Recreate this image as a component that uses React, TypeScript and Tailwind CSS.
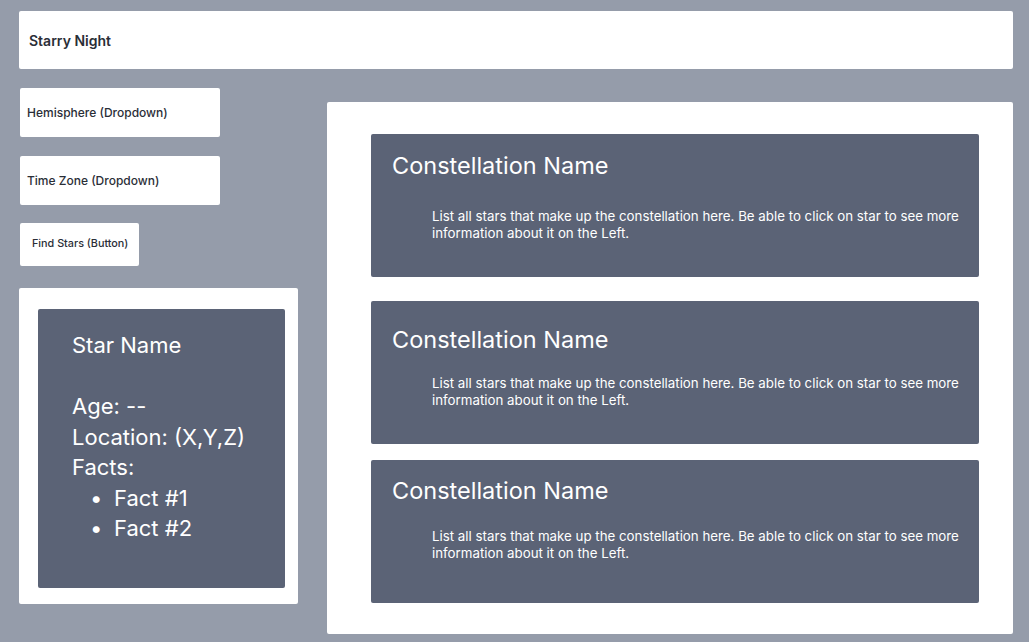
const font = { fontFamily: "Inter, 'Noto Sans', sans-serif" };

const constellations = [
  { id: 1, title: "pt-[18px]", gap: "mt-[28px]", mb: "mb-[24px]" },
  { id: 2, title: "pt-[25px]", gap: "mt-[21px]", mb: "mb-[16px]" },
  { id: 3, title: "pt-[17px]", gap: "mt-[23px]", mb: "" },
];

function ConstellationCard({ title, gap, mb }: { title: string; gap: string; mb: string }) {
  return (
    <div className={`h-[143px] rounded-[2px] bg-[#5b6376] text-white ${mb}`}>
      <h2 className={`pl-[21px] text-[23.5px] leading-[28px] font-normal ${title}`}>Constellation Name</h2>
      <p className={`pl-[61px] pr-[6px] text-[13.3px] leading-[17px] ${gap}`}>
        List all stars that make up the constellation here. Be able to click on star to see more information about it on
        the Left.
      </p>
    </div>
  );
}

export default function App() {
  return (
    <div style={font} className="min-h-[642px] bg-[#959caa] pt-[11px] pl-[19px] pr-[16px] text-[#2a2e37]">
      <header className="flex h-[58px] items-center rounded-[2px] bg-white pl-[10px] text-[14px] font-semibold">
        Starry Night
      </header>

      <div className="mt-[19px] flex gap-[29px]">
        <aside className="flex w-[279px] shrink-0 flex-col">
          <div className="ml-[1px] flex h-[49px] w-[200px] items-center rounded-[2px] bg-white pl-[7px] text-[12px] font-medium">
            Hemisphere (Dropdown)
          </div>
          <div className="mt-[19px] ml-[1px] flex h-[49px] w-[200px] items-center rounded-[2px] bg-white pl-[7px] text-[12px] font-medium">
            Time Zone (Dropdown)
          </div>
          <button className="mt-[18px] ml-[1px] flex h-[43px] w-[119px] items-center rounded-[2px] bg-white pl-[12px] text-[10.8px] font-medium">
            Find Stars (Button)
          </button>

          <div className="mt-[22px] h-[316px] rounded-[2px] bg-white pt-[21px] pl-[19px] pr-[13px]">
            <div className="h-[279px] rounded-[2px] bg-[#5b6376] pt-[21px] pl-[34px] text-[22px] leading-[30.5px] text-white">
              <div>Star Name</div>
              <div className="mt-[30.5px]">Age: --</div>
              <div>Location: (X,Y,Z)</div>
              <div>Facts:</div>
              {["Fact #1", "Fact #2"].map((f) => (
                <div key={f} className="flex">
                  <span className="ml-[18px] w-[24px]">•</span>
                  {f}
                </div>
              ))}
            </div>
          </div>
        </aside>

        <main className="mt-[14px] h-[532px] flex-1 rounded-[2px] bg-white pt-[32px] pl-[44px] pr-[34px]">
          {constellations.map((c) => (
            <ConstellationCard key={c.id} title={c.title} gap={c.gap} mb={c.mb} />
          ))}
        </main>
      </div>
    </div>
  );
}
